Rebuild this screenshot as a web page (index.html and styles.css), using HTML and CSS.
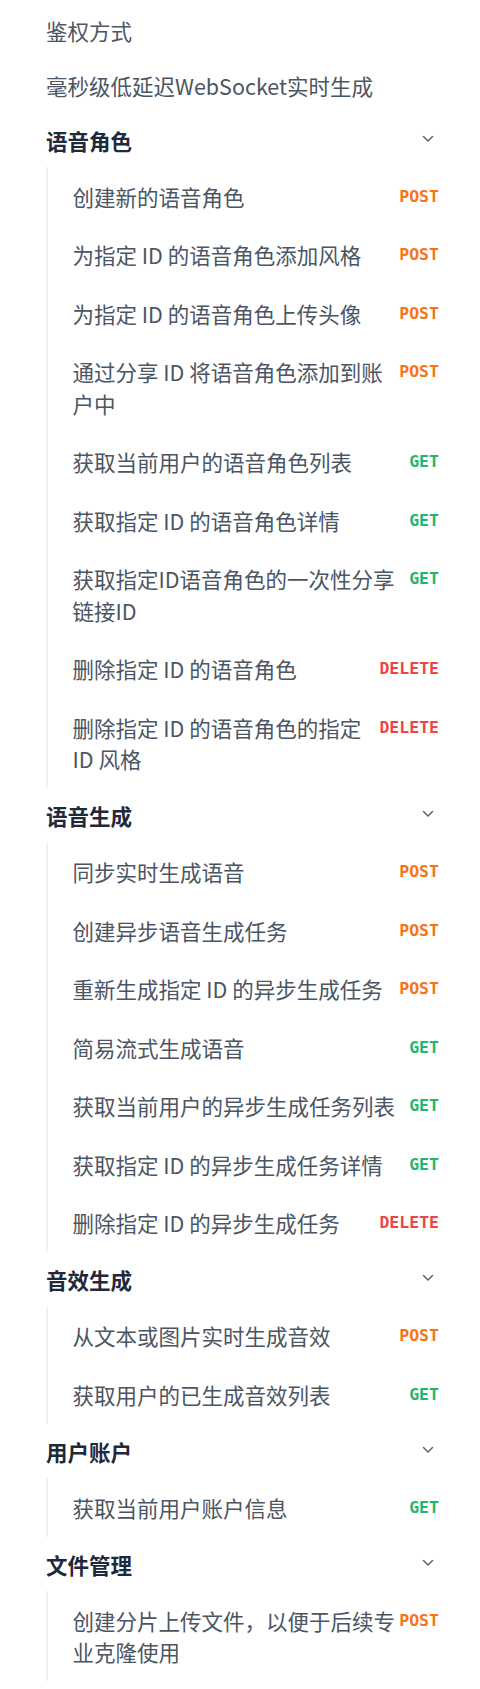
FILE: index.html
```html
<!DOCTYPE html>
<html lang="zh-CN">
<head>
<meta charset="utf-8">
<title>API 导航</title>
<link rel="stylesheet" href="styles.css">
</head>
<body>
<nav class="sidebar">
  <a class="top-item">鉴权方式</a>
  <a class="top-item">毫秒级低延迟WebSocket实时生成</a>

  <section class="group">
    <div class="group-head"><span>语音角色</span><svg class="chev" viewBox="0 0 12 12"><path d="M1.5 3.5 L6 8 L10.5 3.5"/></svg></div>
    <ul class="sublist">
      <li class="sub-item"><span class="label">创建新的语音角色</span><span class="method post">POST</span></li>
      <li class="sub-item"><span class="label">为指定 ID 的语音角色添加风格</span><span class="method post">POST</span></li>
      <li class="sub-item"><span class="label">为指定 ID 的语音角色上传头像</span><span class="method post">POST</span></li>
      <li class="sub-item"><span class="label">通过分享 ID 将语音角色添加到账户中</span><span class="method post">POST</span></li>
      <li class="sub-item"><span class="label">获取当前用户的语音角色列表</span><span class="method get">GET</span></li>
      <li class="sub-item"><span class="label">获取指定 ID 的语音角色详情</span><span class="method get">GET</span></li>
      <li class="sub-item"><span class="label">获取指定ID语音角色的一次性分享链接ID</span><span class="method get">GET</span></li>
      <li class="sub-item"><span class="label">删除指定 ID 的语音角色</span><span class="method delete">DELETE</span></li>
      <li class="sub-item"><span class="label">删除指定 ID 的语音角色的指定 ID 风格</span><span class="method delete">DELETE</span></li>
    </ul>
  </section>

  <section class="group">
    <div class="group-head"><span>语音生成</span><svg class="chev" viewBox="0 0 12 12"><path d="M1.5 3.5 L6 8 L10.5 3.5"/></svg></div>
    <ul class="sublist">
      <li class="sub-item"><span class="label">同步实时生成语音</span><span class="method post">POST</span></li>
      <li class="sub-item"><span class="label">创建异步语音生成任务</span><span class="method post">POST</span></li>
      <li class="sub-item"><span class="label">重新生成指定 ID 的异步生成任务</span><span class="method post">POST</span></li>
      <li class="sub-item"><span class="label">简易流式生成语音</span><span class="method get">GET</span></li>
      <li class="sub-item"><span class="label">获取当前用户的异步生成任务列表</span><span class="method get">GET</span></li>
      <li class="sub-item"><span class="label">获取指定 ID 的异步生成任务详情</span><span class="method get">GET</span></li>
      <li class="sub-item"><span class="label">删除指定 ID 的异步生成任务</span><span class="method delete">DELETE</span></li>
    </ul>
  </section>

  <section class="group">
    <div class="group-head"><span>音效生成</span><svg class="chev" viewBox="0 0 12 12"><path d="M1.5 3.5 L6 8 L10.5 3.5"/></svg></div>
    <ul class="sublist">
      <li class="sub-item"><span class="label">从文本或图片实时生成音效</span><span class="method post">POST</span></li>
      <li class="sub-item"><span class="label">获取用户的已生成音效列表</span><span class="method get">GET</span></li>
    </ul>
  </section>

  <section class="group">
    <div class="group-head"><span>用户账户</span><svg class="chev" viewBox="0 0 12 12"><path d="M1.5 3.5 L6 8 L10.5 3.5"/></svg></div>
    <ul class="sublist">
      <li class="sub-item"><span class="label">获取当前用户账户信息</span><span class="method get">GET</span></li>
    </ul>
  </section>

  <section class="group">
    <div class="group-head"><span>文件管理</span><svg class="chev" viewBox="0 0 12 12"><path d="M1.5 3.5 L6 8 L10.5 3.5"/></svg></div>
    <ul class="sublist">
      <li class="sub-item"><span class="label">创建分片上传文件，以便于后续专业克隆使用</span><span class="method post">POST</span></li>
    </ul>
  </section>
</nav>
</body>
</html>
```

FILE: styles.css
```css
html, body {
  margin: 0;
  padding: 0;
  background: #ffffff;
}

body {
  font-family: "Noto Sans CJK SC", "Noto Sans", sans-serif;
  font-size: 21.5px;
  color: #4b5563;
}

.sidebar {
  display: flex;
  flex-direction: column;
  padding: 3.5px 41px 0 46px;
}

.top-item {
  display: block;
  line-height: 31.5px;
  padding: 11.75px 0;
  color: #4b5563;
  text-decoration: none;
}

.group {
  display: flex;
  flex-direction: column;
}

.group-head {
  display: flex;
  align-items: center;
  justify-content: space-between;
  line-height: 31.5px;
  padding: 11px 0;
  font-weight: 700;
  color: #1e293b;
}

.chev {
  width: 12px;
  height: 12px;
  margin-right: 5px;
  margin-top: -3px;
  fill: none;
  stroke: #5b6474;
  stroke-width: 1.5;
  stroke-linecap: round;
  stroke-linejoin: round;
}

.sublist {
  list-style: none;
  margin: 0 0 1px 0;
  padding: 0;
  border-left: 2px solid #eef0f5;
}

.sub-item {
  display: flex;
  align-items: flex-start;
  gap: 3px;
  padding: 13.5px 0 13.5px 24.5px;
  line-height: 31.5px;
}

.label {
  flex: 1;
  min-width: 0;
  color: #4b5563;
}

.method {
  flex-shrink: 0;
  font-family: "DejaVu Sans Mono", "Liberation Mono", monospace;
  font-weight: 700;
  font-size: 16.5px;
  line-height: 31.5px;
}

.post { color: #f97316; }
.get { color: #1fb66f; }
.delete { color: #ef4444; }
```
